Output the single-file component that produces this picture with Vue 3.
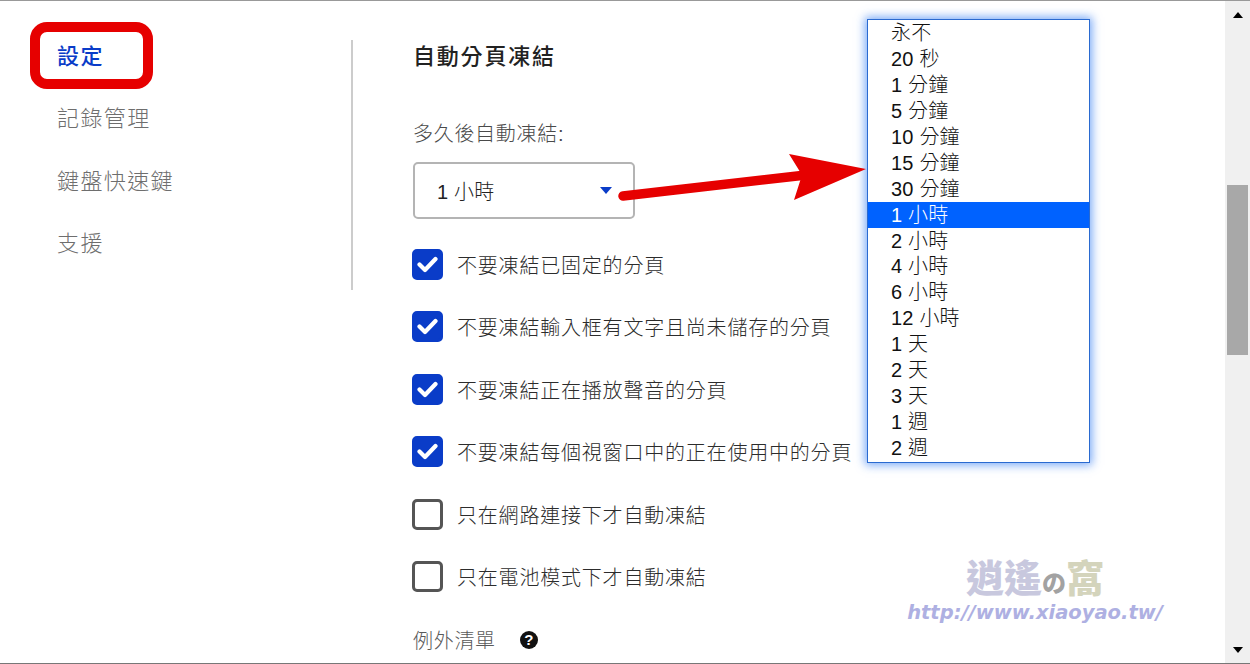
<template>
  <div class="page">
    <aside class="side">
      <nav class="nav">
        <a v-for="(n, i) in navItems" :key="n" class="nav-item" :class="{ active: i === 0 }">{{ n }}</a>
      </nav>
    </aside>
    <main class="main">
      <h2 class="title">自動分頁凍結</h2>
      <div class="label">多久後自動凍結:</div>
      <div class="select">
        <span>1 小時</span>
        <i class="caret"></i>
      </div>
      <div class="rows">
        <label v-for="r in rows" :key="r.text" class="row">
          <span class="box" :class="{ on: r.on }">
            <svg v-if="r.on" width="21" height="17" viewBox="0 0 21 17"><path d="M2.5 8.5l5.5 5.5L18.5 3" fill="none" stroke="#fff" stroke-width="4.2" stroke-linecap="round" stroke-linejoin="round"/></svg>
          </span>
          <span>{{ r.text }}</span>
        </label>
      </div>
      <div class="except">
        <span>例外清單</span>
        <span class="help">?</span>
      </div>
    </main>
    <div class="scrollbar">
      <i class="up"></i>
      <div class="track"><div class="thumb"></div></div>
      <i class="down"></i>
    </div>

    <ul class="list">
      <li v-for="o in options" :key="o" :class="{ sel: o === '1 小時' }">{{ o }}</li>
    </ul>

    <div class="red-box"></div>
    <svg class="arrow" width="1250" height="664" viewBox="0 0 1250 664">
      <path d="M623 196L806 175" stroke="#e60000" stroke-width="9.5" stroke-linecap="round" fill="none"/>
      <path d="M789 154L866 169L794 200L802 175Z" fill="#e60000"/>
    </svg>

    <div class="mark">
      <div class="mark-cn">逍遙<span class="no">の</span><span class="wo">窩</span></div>
      <div class="mark-url">http://www.xiaoyao.tw/</div>
    </div>
  </div>
</template>

<script setup>
const navItems = ['設定', '記錄管理', '鍵盤快速鍵', '支援']
const rows = [
  { text: '不要凍結已固定的分頁', on: true },
  { text: '不要凍結輸入框有文字且尚未儲存的分頁', on: true },
  { text: '不要凍結正在播放聲音的分頁', on: true },
  { text: '不要凍結每個視窗口中的正在使用中的分頁', on: true },
  { text: '只在網路連接下才自動凍結', on: false },
  { text: '只在電池模式下才自動凍結', on: false },
]
const options = ['永不', '20 秒', '1 分鐘', '5 分鐘', '10 分鐘', '15 分鐘', '30 分鐘', '1 小時', '2 小時', '4 小時', '6 小時', '12 小時', '1 天', '2 天', '3 天', '1 週', '2 週']
</script>

<style>
html, body { margin: 0; background: #fff; overflow: hidden; }
</style>

<style scoped>
.page {
  position: relative;
  display: flex;
  width: 1250px;
  height: 664px;
  box-sizing: border-box;
  overflow: hidden;
  background: #fff;
  border-top: 1px solid #999;
  border-bottom: 1px solid #777;
  font-family: "Liberation Sans", "Noto Sans CJK TC", sans-serif;
  color: #333;
}
.side {
  flex: none;
  width: 353px;
  box-sizing: border-box;
  padding-top: 39px;
}
.nav {
  display: flex;
  flex-direction: column;
  height: 250px;
  box-sizing: border-box;
  padding-left: 57px;
  border-right: 2px solid #ccc;
}
.nav-item {
  height: 62.4px;
  line-height: 34px;
  font-size: 22px;
  letter-spacing: 1.4px;
  font-weight: 300;
  color: #6e6e6e;
}
.nav-item.active { color: #0a3cc8; font-weight: 500; }
.main {
  flex: 1;
  padding: 39px 0 0 60px;
}
.title {
  margin: 0;
  height: 34px;
  line-height: 34px;
  font-size: 22px;
  letter-spacing: 1.8px;
  font-weight: 500;
  color: #222;
}
.label {
  margin-top: 43px;
  height: 34px;
  line-height: 34px;
  font-size: 20px;
  letter-spacing: .7px;
  font-weight: 300;
  color: #4a4a4a;
}
.select {
  display: flex;
  align-items: center;
  justify-content: space-between;
  box-sizing: border-box;
  width: 222px;
  height: 57px;
  margin-top: 11px;
  padding: 0 21px 0 22px;
  border: 2px solid #b4b4b4;
  border-radius: 5px;
  font-size: 20px;
  letter-spacing: .2px;
  font-weight: 300;
  color: #222;
}
.caret {
  width: 0;
  height: 0;
  border-left: 6.5px solid transparent;
  border-right: 6.5px solid transparent;
  border-top: 7.5px solid #0a3cc8;
}
.rows {
  display: flex;
  flex-direction: column;
  gap: 31.4px;
  margin-top: 30px;
  margin-left: -1px;
}
.row {
  display: flex;
  align-items: center;
  gap: 14px;
  height: 31px;
  font-size: 20px;
  letter-spacing: .8px;
  font-weight: 300;
  color: #2c2c2c;
}
.box {
  flex: none;
  display: flex;
  align-items: center;
  justify-content: center;
  box-sizing: border-box;
  width: 31px;
  height: 31px;
  border: 3px solid #555;
  border-radius: 5px;
}
.box.on { background: #0a3cc8; border-color: #0a3cc8; }
.except {
  display: flex;
  align-items: center;
  gap: 24px;
  margin-top: 33px;
  height: 30px;
  font-size: 20px;
  letter-spacing: .7px;
  font-weight: 300;
  color: #5a5a5a;
}
.help {
  display: flex;
  align-items: center;
  justify-content: center;
  width: 18px;
  height: 18px;
  border-radius: 50%;
  background: #111;
  color: #fff;
  font-size: 15px;
  letter-spacing: 0;
  font-weight: 700;
}
.scrollbar {
  flex: none;
  display: flex;
  flex-direction: column;
  align-items: center;
  width: 25px;
  background: #f0f0f0;
}
.up, .down {
  flex: none;
  width: 0;
  height: 0;
  border-left: 5px solid transparent;
  border-right: 5px solid transparent;
}
.up { margin: 11px 0 5px; border-bottom: 6px solid #000; }
.down { margin: 5px 0 10px; border-top: 6px solid #000; }
.track { flex: 1; width: 100%; padding-top: 162px; box-sizing: border-box; display: flex; justify-content: center; }
.thumb { width: 21px; height: 170px; background: #a8a8a8; }
.list {
  position: absolute;
  left: 867px;
  top: 18px;
  width: 223px;
  box-sizing: border-box;
  margin: 0;
  padding: 0 0 1px;
  list-style: none;
  background: #fff;
  border: 1px solid #2a6ad0;
  box-shadow: 0 0 9px 2px rgba(30, 110, 240, .6);
  font-size: 20px;
  letter-spacing: .2px;
  font-weight: 300;
  color: #111;
}
.list li {
  height: 25.94px;
  line-height: 26px;
  padding-left: 23px;
}
.list li.sel { background: #0062ff; color: #fff; }
.red-box {
  position: absolute;
  left: 30px;
  top: 21px;
  width: 123px;
  height: 67px;
  box-sizing: border-box;
  border: 10px solid #e60000;
  border-radius: 17px;
}
.arrow { position: absolute; left: 0; top: -1px; pointer-events: none; }
.mark {
  position: absolute;
  left: 905px;
  top: 550px;
  width: 260px;
  text-align: center;
  pointer-events: none;
}
.mark-cn {
  height: 50px;
  line-height: 50px;
  font-family: "Noto Sans CJK TC", sans-serif;
  font-size: 38px;
  font-weight: 900;
  color: #c8c8de;
  white-space: nowrap;
}
.mark-cn .no { font-size: 24px; color: #a2a2a2; }
.mark-cn .wo { color: #d4d4bc; }
.mark-url {
  font-family: "DejaVu Sans", sans-serif;
  font-size: 19.5px;
  line-height: 24px;
  font-weight: 700;
  font-style: italic;
  color: #aeb0e2;
  white-space: nowrap;
}
</style>
